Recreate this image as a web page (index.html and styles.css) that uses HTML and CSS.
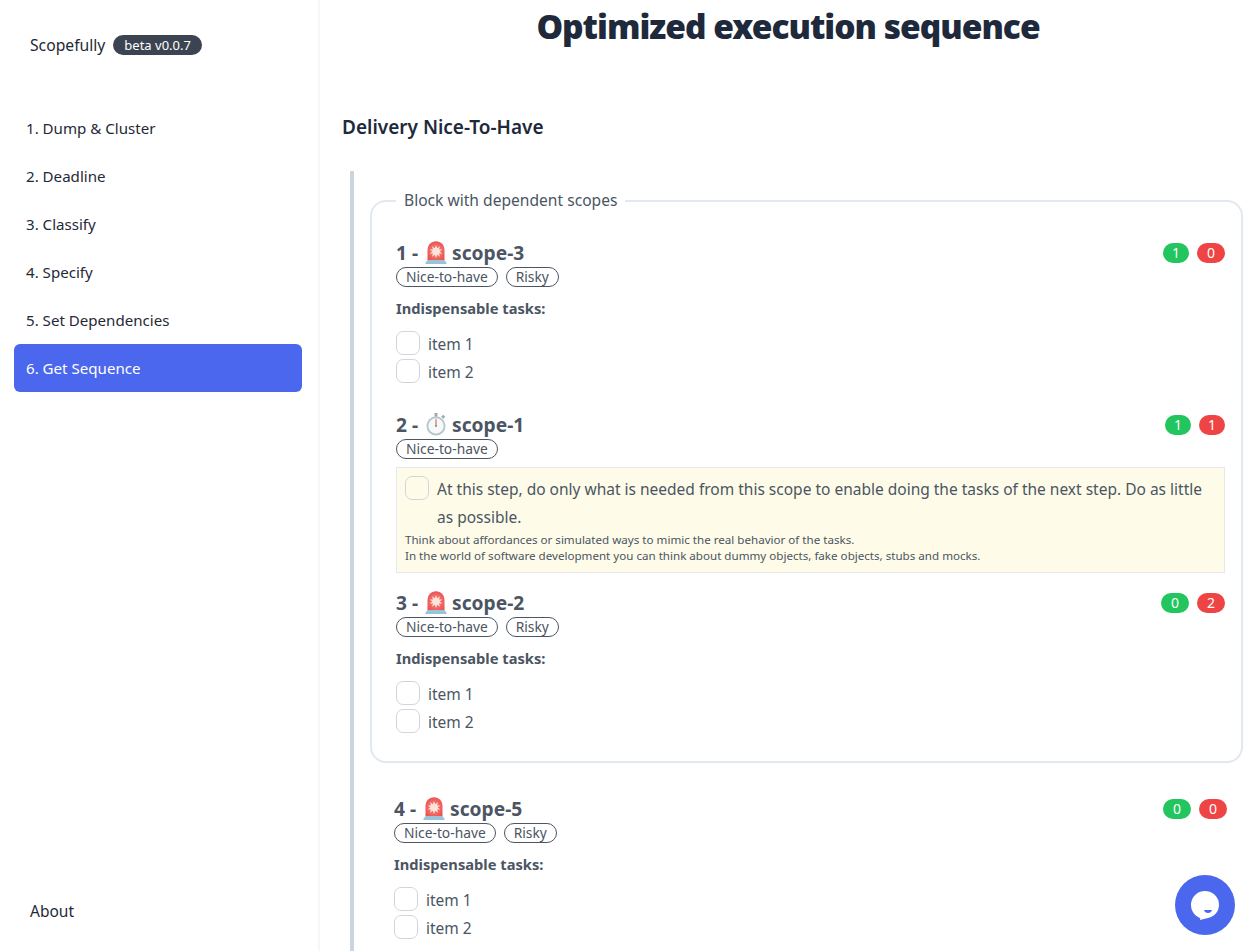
FILE: index.html
```html
<!DOCTYPE html>
<html>

<head>
    <meta charset="UTF-8">
    <meta name="viewport" content="width=device-width, initial-scale=1">
    <title>Scopefully</title>
    <link rel="stylesheet" href="styles.css">
</head>

<body>
    <svg class="defs" width="0" height="0" aria-hidden="true">
        <defs>
            <radialGradient id="glow" cx="50%" cy="55%" r="60%">
                <stop offset="0" stop-color="#f98a80"/>
                <stop offset="1" stop-color="#e9504f"/>
            </radialGradient>
        </defs>
        <symbol id="siren" viewBox="0 0 22 23">
            <path d="M2.500 19V9.500C2.500 4 6 .3 11 .3s8.500 3.700 8.500 9.200V19z" fill="url(#glow)"/>
            <path d="M11 4l1.200 3.300 2.800-2-1 3.300 3.400-.1-2.800 2 2.800 2-3.400-.1 1 3.300-2.800-2L11 17l-1.200-3.300-2.800 2 1-3.300-3.400.1 2.800-2-2.800-2 3.400.1-1-3.300 2.800 2z" fill="#fde3da"/>
            <path d="M2.500 19h17l2.300 3.200a.8.8 0 0 1-.6.8H.8a.8.8 0 0 1-.6-.8z" fill="#9cc4d8"/>
        </symbol>
        <symbol id="stopwatch" viewBox="0 0 22 24">
            <rect x="9.500" y="0" width="3" height="4" fill="#9aa9b2"/>
            <rect x="17" y="2.500" width="3" height="3" transform="rotate(45 18.500 4)" fill="#9aa9b2"/>
            <circle cx="11" cy="13.500" r="10" fill="#b8c6ce"/>
            <circle cx="11" cy="13.500" r="8" fill="#f6f8f9"/>
            <path d="M11 13.500V6.500" stroke="#d9655f" stroke-width="1.200"/>
            <circle cx="11" cy="13.500" r="1" fill="#7b8790"/>
        </symbol>
    </svg>

    <div class="app">
        <aside class="sidebar">
            <div class="brand">
                <span>Scopefully</span>
                <span class="version">beta v0.0.7</span>
            </div>
            <nav class="steps">
                <a class="step">1. Dump &amp; Cluster</a>
                <a class="step">2. Deadline</a>
                <a class="step">3. Classify</a>
                <a class="step">4. Specify</a>
                <a class="step">5. Set Dependencies</a>
                <a class="step active">6. Get Sequence</a>
            </nav>
            <a class="about">About</a>
        </aside>

        <main class="content">
            <h1>Optimized execution sequence</h1>
            <h2>Delivery Nice-To-Have</h2>

            <div class="sequence">
                <fieldset class="block">
                    <legend>Block with dependent scopes</legend>

                    <section class="scope">
                        <div class="scope-head">
                            <h3>1 - <svg class="emoji"><use href="#siren"/></svg> scope-3</h3>
                            <div class="counts"><span class="count one green">1</span><span class="count red">0</span></div>
                        </div>
                        <div class="tags"><span class="tag">Nice-to-have</span><span class="tag">Risky</span></div>
                        <p class="tasks-title">Indispensable tasks:</p>
                        <div class="tasks">
                            <label class="task"><span class="box"></span>item 1</label>
                            <label class="task"><span class="box"></span>item 2</label>
                        </div>
                    </section>

                    <section class="scope">
                        <div class="scope-head">
                            <h3>2 - <svg class="emoji"><use href="#stopwatch"/></svg> scope-1</h3>
                            <div class="counts"><span class="count one green">1</span><span class="count one red">1</span></div>
                        </div>
                        <div class="tags"><span class="tag">Nice-to-have</span></div>
                        <div class="note">
                            <div class="note-main">
                                <span class="box"></span>
                                <p>At this step, do only what is needed from this scope to enable doing the tasks of the next step. Do as little as possible.</p>
                            </div>
                            <small>Think about affordances or simulated ways to mimic the real behavior of the tasks.<br>In the world of software development you can think about dummy objects, fake objects, stubs and mocks.</small>
                        </div>
                    </section>

                    <section class="scope">
                        <div class="scope-head">
                            <h3>3 - <svg class="emoji"><use href="#siren"/></svg> scope-2</h3>
                            <div class="counts"><span class="count green">0</span><span class="count red">2</span></div>
                        </div>
                        <div class="tags"><span class="tag">Nice-to-have</span><span class="tag">Risky</span></div>
                        <p class="tasks-title">Indispensable tasks:</p>
                        <div class="tasks">
                            <label class="task"><span class="box"></span>item 1</label>
                            <label class="task"><span class="box"></span>item 2</label>
                        </div>
                    </section>
                </fieldset>

                <section class="scope single">
                    <div class="scope-head">
                        <h3>4 - <svg class="emoji"><use href="#siren"/></svg> scope-5</h3>
                        <div class="counts"><span class="count green">0</span><span class="count red">0</span></div>
                    </div>
                    <div class="tags"><span class="tag">Nice-to-have</span><span class="tag">Risky</span></div>
                    <p class="tasks-title">Indispensable tasks:</p>
                    <div class="tasks">
                        <label class="task"><span class="box"></span>item 1</label>
                        <label class="task"><span class="box"></span>item 2</label>
                    </div>
                </section>
            </div>
        </main>
    </div>

    <button class="chat" aria-label="Open chat">
        <svg viewBox="0 0 30 30" width="30" height="30">
            <path d="M15 1a14 14 0 0 1 14 14c0 6.500-4.500 11-10 12.800L10 30l.3-1.800A14 14 0 0 1 15 1z" fill="#fff"/>
            <path d="M14 20h8c-.5 2-2 3-4 3s-3.500-1-4-3z" fill="#4a67ee"/>
        </svg>
    </button>
</body>

</html>
```

FILE: styles.css
```css
* {
    box-sizing: border-box;
}

html,
body {
    margin: 0;
    height: 951px;
    overflow: hidden;
}

body {
    position: relative;
    font-family: "Noto Sans", Arial, sans-serif;
    font-size: 16px;
    color: #1f2937;
    background-color: white;
}

.defs {
    position: absolute;
}

.app {
    display: flex;
    height: 951px;
}

/* Sidebar */
.sidebar {
    display: flex;
    flex-direction: column;
    flex: none;
    width: 320px;
    height: 100%;
    padding: 0 16px 0 14px;
    border-right: 2px solid #f6f7f8;
}

.brand {
    display: flex;
    align-items: center;
    gap: 8px;
    height: 20px;
    margin: 35px 0 49px 16px;
    font-size: 15.700px;
}

.version {
    display: inline-block;
    padding: 0 11px;
    line-height: 20px;
    font-size: 13px;
    color: white;
    background-color: #3d4451;
    border-radius: 10px;
}

.steps {
    display: flex;
    flex-direction: column;
}

.step {
    height: 48px;
    padding-left: 12px;
    line-height: 48px;
    font-size: 15.100px;
    border-radius: 6px;
}

.step.active {
    color: white;
    background-color: #4a67ee;
}

.about {
    margin: auto 0 28px 16px;
    line-height: 24px;
    font-size: 15.500px;
}

/* Main column */
.content {
    display: flex;
    flex-direction: column;
    flex: 1;
    min-width: 0;
    height: 100%;
    padding: 0 11px 0 22px;
}

h1 {
    margin: 3px 9px 0 0;
    text-align: center;
    font-size: 33.500px;
    line-height: 46px;
    font-weight: 900;
    letter-spacing: -1px;
    color: #1e293b;
}

h2 {
    margin: 54px 0 0;
    font-size: 19px;
    line-height: 48px;
    font-weight: 600;
    color: #1e293b;
}

.sequence {
    flex: 1;
    min-height: 0;
    margin: 20px 0 0 8px;
    padding: 18px 0 0 16px;
    border-left: 4px solid #cbd5e1;
}

.block {
    margin: 0;
    padding: 26px 16px 16px 24px;
    border: 2px solid #e2e8f0;
    border-radius: 16px;
    min-width: 0;
}

legend {
    padding: 0 8px 2px;
    font-size: 15.600px;
    line-height: 22px;
    color: #4b5563;
}

/* Scope cards */
.scope {
    color: #4b5563;
    margin-bottom: 16px;
}

.block .scope:last-child {
    margin-bottom: 0;
}

.scope.single {
    margin: 32px 16px 0 24px;
}

.single .tasks {
    padding-bottom: 0;
}

.scope-head {
    display: flex;
    justify-content: space-between;
    align-items: flex-start;
}

h3 {
    margin: 0;
    font-size: 19.200px;
    line-height: 28px;
    font-weight: 700;
}

.emoji {
    width: 22px;
    height: 23px;
    margin-left: 2px;
    vertical-align: -4px;
}

.counts {
    display: flex;
    gap: 8px;
    margin-top: 4px;
}

.count {
    padding: 0 10px;
    line-height: 20px;
    font-size: 14px;
    text-align: center;
    color: white;
    border-radius: 10px;
}

.count.one {
    padding: 0 9px;
}

.green {
    background-color: #22c55e;
}

.red {
    background-color: #ef4444;
}

.tags {
    display: flex;
    gap: 8px;
}

.tag {
    padding: 0 9px;
    height: 20px;
    line-height: 18px;
    font-size: 13.800px;
    border: 1px solid #4b5563;
    border-radius: 10px;
}

.tasks-title {
    margin: 9px 0 10px;
    font-size: 14.700px;
    line-height: 24px;
    font-weight: 700;
}

.tasks {
    padding-bottom: 9px;
}

.task {
    display: flex;
    align-items: center;
    gap: 8px;
    height: 28px;
    font-size: 15.500px;
}

.box {
    display: inline-block;
    flex: none;
    width: 24px;
    height: 24px;
    border: 1px solid #d1d5db;
    border-radius: 7px;
}

.task .box {
    margin-bottom: 2px;
}

.note {
    margin-top: 8px;
    padding: 8px;
    background-color: #fefce8;
    border: 1px solid #e5e7eb;
}

.note-main {
    display: flex;
    gap: 8px;
}

.note-main p {
    margin: -1px 0 1px;
    line-height: 28px;
    font-size: 15.500px;
}

small {
    display: block;
    font-size: 11.600px;
    line-height: 16px;
}

/* Chat launcher */
.chat {
    position: absolute;
    left: 1175px;
    top: 875px;
    display: flex;
    align-items: center;
    justify-content: center;
    width: 60px;
    height: 60px;
    padding: 0;
    border: 0;
    border-radius: 50%;
    background-color: #4a67ee;
}
```
